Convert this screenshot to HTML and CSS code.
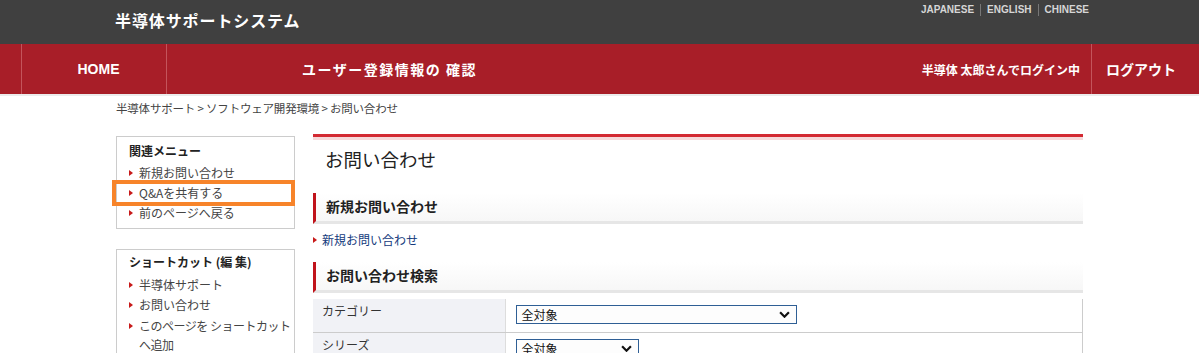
FILE: index.html
```html
<!DOCTYPE html>
<html lang="ja">
<head>
<meta charset="utf-8">
<title>お問い合わせ</title>
<link rel="stylesheet" href="styles.css">
</head>
<body>
<header class="topbar">
  <div class="site-title">半導体サポートシステム</div>
  <ul class="langs">
    <li>JAPANESE</li>
    <li>ENGLISH</li>
    <li>CHINESE</li>
  </ul>
</header>
<nav class="gnav">
  <div class="nav-lead"></div>
  <div class="nav-home">HOME</div>
  <div class="nav-confirm">ユーザー登録情報の 確認</div>
  <div class="nav-fill"></div>
  <div class="nav-user">半導体 太郎さんでログイン中</div>
  <div class="nav-logout">ログアウト</div>
</nav>
<div class="nav-shadow"></div>
<div class="wrap">
  <div class="crumbs">半導体サポート &gt; ソフトウェア開発環境 &gt; お問い合わせ</div>
  <div class="cols">
    <aside class="side">
      <div class="side-box">
        <div class="side-title">関連メニュー</div>
        <ul class="side-list">
          <li>新規お問い合わせ</li>
          <li class="marked">Q&amp;Aを共有する<span class="highlight"></span></li>
          <li>前のページへ戻る</li>
        </ul>
      </div>
      <div class="side-box box2">
        <div class="side-title">ショートカット (編 集)</div>
        <ul class="side-list">
          <li>半導体サポート</li>
          <li>お問い合わせ</li>
          <li class="nowrap">このページを ショートカット<br>へ追加</li>
        </ul>
      </div>
    </aside>
    <main class="main">
      <h1 class="page-title">お問い合わせ</h1>
      <h2 class="sec">新規お問い合わせ</h2>
      <div class="link-row"><span class="bullet"></span><span class="link">新規お問い合わせ</span></div>
      <h2 class="sec">お問い合わせ検索</h2>
      <table class="search">
        <tr>
          <th>カテゴリー</th>
          <td><div class="select wide"><span>全対象</span><svg class="chev" viewBox="0 0 10 6" width="11" height="7"><path d="M1 1 L5 5 L9 1" fill="none" stroke="#111" stroke-width="2"/></svg></div></td>
        </tr>
        <tr>
          <th>シリーズ</th>
          <td><div class="select narrow"><span>全対象</span><svg class="chev" viewBox="0 0 10 6" width="11" height="7"><path d="M1 1 L5 5 L9 1" fill="none" stroke="#111" stroke-width="2"/></svg></div></td>
        </tr>
      </table>
    </main>
  </div>
</div>
</body>
</html>
```
FILE: styles.css
```css
* { box-sizing: border-box; }
html, body { margin: 0; padding: 0; }
body {
  font-family: "Noto Sans CJK JP", "Liberation Sans", sans-serif;
  font-size: 12px;
  color: #333;
  background: #fff;
  width: 1199px;
  overflow: hidden;
}
ul { list-style: none; margin: 0; padding: 0; }

.topbar {
  height: 44px;
  background: #404040;
  display: flex;
  justify-content: space-between;
  padding: 0 110px 0 115px;
}
.site-title {
  color: #fff;
  font-weight: bold;
  font-size: 16px;
  letter-spacing: 0.9px;
  line-height: 40px;
}
.langs {
  display: flex;
  padding-top: 4px;
}
.langs li {
  font-family: "Liberation Sans", sans-serif;
  font-weight: bold;
  font-size: 10px;
  color: #d6d6d6;
  line-height: 12px;
  height: 12px;
  padding: 0 6px;
  border-left: 1px solid #777;
}
.langs li:first-child { border-left: none; }
.langs li:last-child { padding-right: 0; }

.gnav {
  height: 50px;
  background: #a81e28;
  display: flex;
  align-items: stretch;
  color: #fff;
  font-weight: bold;
}
.gnav > div { display: flex; align-items: center; }
.nav-lead { width: 22px; border-right: 1px solid #c4545b; }
.nav-home {
  width: 145px;
  justify-content: center;
  padding-left: 9px;
  border-right: 1px solid #c4545b;
  font-family: "Liberation Sans", sans-serif;
  font-size: 14px;
}
.nav-confirm { padding-left: 135px; font-size: 14px; letter-spacing: 1.5px; }
.nav-fill { flex: 1; }
.nav-user { font-size: 12px; padding-right: 11px; }
.nav-logout {
  width: 108px;
  border-left: 1px solid #c4545b;
  padding-left: 14px;
  font-size: 14px;
}
.nav-shadow { height: 2px; background: #ececec; }

.wrap { padding: 0 116px; }
.crumbs { line-height: 16px; padding-top: 4px; color: #444; font-size: 11.5px; letter-spacing: -0.2px; }
.cols { display: flex; gap: 18px; margin-top: 20px; }
.side { width: 179px; flex: none; }
.side-box {
  border: 1px solid #ccc;
  padding: 5px 0 5px 12px;
}
.box2 { margin-top: 20px; padding-top: 3px; }
.side-title { font-weight: bold; color: #222; line-height: 18px; margin-bottom: 3px; }
.box2 .side-title { margin-bottom: 4px; }
.side-list li {
  position: relative;
  padding-left: 10px;
  line-height: 20px;
  color: #444;
}
.side-list li::before {
  content: "";
  position: absolute;
  left: 0;
  top: 7px;
  border-left: 4px solid #c81a1a;
  border-top: 3px solid transparent;
  border-bottom: 3px solid transparent;
}
.side-list li.nowrap { white-space: nowrap; letter-spacing: -0.5px; line-height: 19px; margin-top: 1px; }
.highlight {
  position: absolute;
  left: -17px;
  top: -3px;
  width: 183px;
  height: 26px;
  border: 4px solid #f7842a;
  pointer-events: none;
}

.main { width: 770px; flex: none; margin-top: -2px; }
.page-title {
  margin: 0;
  border-top: 3px solid #d32a33;
  box-shadow: inset 0 3px 0 #f6dadb;
  font-weight: normal;
  font-size: 18.5px;
  color: #222;
  padding: 9px 0 0 12px;
  height: 59px;
  line-height: 26px;
}
.sec {
  margin: 0;
  font-size: 14px;
  font-weight: bold;
  color: #222;
  border-left: 3px solid #c0131b;
  padding-left: 10px;
  height: 31px;
  line-height: 27px;
  background: linear-gradient(#fff, #f7f7f7);
  border-bottom: 3px solid #e6e6e6;
}
.link-row {
  display: flex;
  align-items: center;
  height: 37px;
  padding-bottom: 8px;
  margin-top: 1px;
}
.bullet {
  border-left: 4px solid #c81a1a;
  border-top: 3px solid transparent;
  border-bottom: 3px solid transparent;
  margin-right: 5px;
}
.link { color: #133a7c; }
.search {
  width: 770px;
  border-collapse: collapse;
  margin-top: 6px;
}
.search th, .search td {
  border-bottom: 1px solid #ccc;
  height: 33px;
  vertical-align: top;
  padding: 0;
}
.search th {
  width: 192px;
  background: #f1f2f6;
  text-align: left;
  font-weight: normal;
  color: #333;
  padding: 3px 0 0 9px;
  border-right: 1px solid #ddd;
}
.search td {
  border-right: 1px solid #ccc;
  padding: 6px 0 0 10px;
}
.select {
  height: 19px;
  border: 1px solid #2f5f95;
  background: #fdfdfd;
  display: flex;
  align-items: center;
  justify-content: space-between;
  padding: 0 6px 0 5px;
  color: #111;
}
.select span { line-height: 17px; }
.wide { width: 281px; }
.narrow { width: 123px; }
```
